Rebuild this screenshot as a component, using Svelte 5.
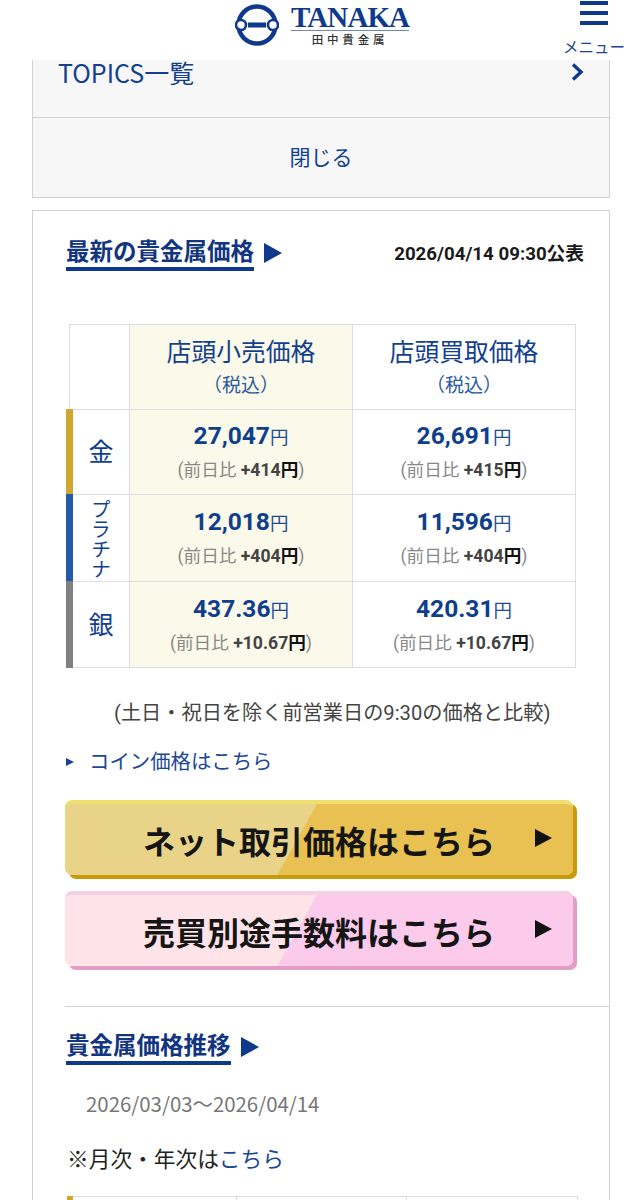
<script>
  const rows = [
    { name: '金', cls: 'gold', retail: '27,047', rd: '+414', buy: '26,691', bd: '+415' },
    { name: 'プラチナ', cls: 'plat', vertical: true, retail: '12,018', rd: '+404', buy: '11,596', bd: '+404' },
    { name: '銀', cls: 'silver', retail: '437.36', rd: '+10.67', buy: '420.31', bd: '+10.67' }
  ];
</script>

<div class="page">
  <header class="header">
    <div class="logo">
      <svg class="mark" width="44" height="44" viewBox="0 0 44 44" aria-hidden="true">
        <circle cx="22" cy="22" r="18.5" fill="none" stroke="#0f3a8c" stroke-width="4.5"/>
        <circle cx="6" cy="22" r="5" fill="#fff" stroke="#0f3a8c" stroke-width="2.6"/>
        <circle cx="38" cy="22" r="5" fill="#fff" stroke="#0f3a8c" stroke-width="2.6"/>
        <rect x="13" y="19.5" width="18" height="5" fill="#0f3a8c"/>
      </svg>
      <div class="wordmark">
        <div class="tanaka">TANAKA</div>
        <div class="kanji">田中貴金属</div>
      </div>
    </div>
    <div class="menu">
      <span class="bars"><i></i><i></i><i></i></span>
      <span class="menu-label">メニュー</span>
    </div>
  </header>

  <section class="topics">
    <div class="topics-link">
      <span class="topics-text">TOPICS一覧</span>
      <svg width="14" height="18" viewBox="0 0 14 18" aria-hidden="true"><path d="M3 1.5L11 9l-8 7.5" fill="none" stroke="#0f3a8c" stroke-width="3.4"/></svg>
    </div>
    <div class="close">閉じる</div>
  </section>

  <section class="card">
    <div class="head-row">
      <h2 class="title"><span>最新の貴金属価格</span><i class="tri"></i></h2>
      <div class="stamp">2026/04/14 09:30公表</div>
    </div>

    <table class="prices">
      <thead>
        <tr>
          <th class="corner"></th>
          <th class="retail">店頭小売価格<small>（税込）</small></th>
          <th>店頭買取価格<small>（税込）</small></th>
        </tr>
      </thead>
      <tbody>
        {#each rows as r}
          <tr class={r.cls}>
            <th class="metal"><span class:vertical={r.vertical}>{r.name}</span></th>
            <td class="retail">
              <div class="price">{r.retail}<span>円</span></div>
              <div class="diff">(前日比 <b>{r.rd}<em>円</em></b>)</div>
            </td>
            <td>
              <div class="price">{r.buy}<span>円</span></div>
              <div class="diff">(前日比 <b>{r.bd}<em>円</em></b>)</div>
            </td>
          </tr>
        {/each}
      </tbody>
    </table>

    <p class="note">(土日・祝日を除く前営業日の9:30の価格と比較)</p>
    <div class="coin"><i></i><span>コイン価格はこちら</span></div>

    <div class="buttons">
      <div class="btn btn-gold"><span>ネット取引価格はこちら</span><i></i></div>
      <div class="btn btn-pink"><span>売買別途手数料はこちら</span><i></i></div>
    </div>

    <div class="trend">
      <h2 class="title"><span>貴金属価格推移</span><i class="tri"></i></h2>
      <div class="range">2026/03/03～2026/04/14</div>
      <div class="monthly">※月次・年次は<span>こちら</span></div>
      <div class="next-table"><i class="mark-cell"></i><i></i><i></i></div>
    </div>
  </section>
</div>

<style>
  :global(body) {
    margin: 0;
    background: #fff;
  }
  .page {
    height: 1200px;
    overflow: hidden;
    font-family: Roboto, "Noto Sans CJK JP", sans-serif;
    color: #222;
  }
  .header {
    height: 60px;
    position: relative;
    display: flex;
    justify-content: center;
  }
  .logo {
    display: flex;
    align-items: flex-start;
    gap: 12px;
    margin: 3px 0 0 2px;
  }
  .wordmark {
    width: 118px;
    margin-top: 0;
  }
  .tanaka {
    font: bold 29px/28px "Liberation Serif", serif;
    color: #0f3a8c;
    letter-spacing: -0.9px;
    text-align: center;
    border-bottom: 1px solid #6d86bb;
    white-space: nowrap;
    height: 27px;
  }
  .kanji {
    font-size: 11.5px;
    line-height: 18px;
    font-weight: 500;
    letter-spacing: 3.8px;
    text-align: center;
    color: #333;
  }
  .menu {
    position: absolute;
    top: 0;
    right: 17px;
    width: 62px;
    display: flex;
    flex-direction: column;
    align-items: center;
  }
  .bars {
    display: flex;
    flex-direction: column;
    gap: 6px;
    margin-top: 1px;
  }
  .bars i {
    display: block;
    width: 28px;
    height: 4px;
    background: #0f3a8c;
  }
  .menu-label {
    font-size: 15.5px;
    line-height: 20px;
    margin-top: 13px;
    color: #1c4190;
    white-space: nowrap;
    position: relative;
    z-index: 1;
  }
  .topics {
    margin: 0 32px;
    box-sizing: border-box;
    height: 138px;
    background: #f7f7f7;
    border: 1px solid #d2d2d2;
    border-top: 0;
  }
  .topics-link {
    height: 58px;
    box-sizing: border-box;
    border-bottom: 1px solid #d2d2d2;
    display: flex;
    align-items: flex-start;
    justify-content: space-between;
    padding: 0 25px 0 25px;
    font-family: "Noto Sans CJK JP", sans-serif;
    font-size: 25px;
    line-height: 24px;
    color: #12408f;
  }
  .topics-link svg {
    margin-top: 3px;
  }
  .close {
    height: 75px;
    padding-bottom: 4px;
    display: flex;
    align-items: center;
    justify-content: center;
    font-size: 21px;
    color: #12408f;
  }
  .card {
    margin: 12px 32px 0;
    border: 1px solid #d2d2d2;
    padding: 0 0 0 33px;
    height: 1100px;
    box-sizing: border-box;
  }
  .head-row {
    display: flex;
    align-items: flex-start;
    justify-content: space-between;
    padding: 25px 25px 0 0;
    height: 113px;
    box-sizing: border-box;
  }
  .title {
    margin: 0;
    display: flex;
    align-items: flex-start;
    gap: 10px;
    font-size: 23.5px;
    font-weight: 700;
    color: #12357f;
    line-height: 33px;
  }
  .title span {
    border-bottom: 4px solid #0f3a8c;
    display: block;
    height: 31px;
    white-space: nowrap;
  }
  .tri {
    display: block;
    width: 0;
    height: 0;
    margin-top: 7px;
    border-left: 18px solid #0f3a8c;
    border-top: 10px solid transparent;
    border-bottom: 10px solid transparent;
  }
  .stamp {
    font-size: 18.7px;
    font-weight: 700;
    color: #1a1a1a;
    line-height: 36px;
    white-space: nowrap;
  }
  .prices {
    margin-left: 3px;
    width: 507px;
    border-collapse: collapse;
    table-layout: fixed;
  }
  .prices th,
  .prices td {
    border: 1px solid #ddd;
    padding: 0;
    text-align: center;
    font-weight: 400;
    color: #12408f;
  }
  .prices thead th {
    height: 85px;
    font-size: 24.8px;
    line-height: 32px;
    padding-top: 2px;
    box-sizing: border-box;
  }
  .prices small {
    display: block;
    font-size: 19px;
    line-height: 26px;
    margin-top: 4px;
    color: #2a5a9e;
  }
  .corner {
    width: 60px;
  }
  .prices .retail {
    background: #fbf9e9;
    width: 223px;
  }
  .prices tbody .metal {
    position: relative;
    font-size: 25px;
    background: #fff;
    padding: 0 0 4px 3px;
    box-sizing: border-box;
  }
  .prices tbody .plat .metal {
    padding: 0;
  }
  .metal::before {
    content: "";
    position: absolute;
    left: -4px;
    top: -1px;
    bottom: -1px;
    width: 7px;
    background: var(--bar);
  }
  .gold { --bar: #cfa630; }
  .plat { --bar: #245ba8; }
  .silver { --bar: #808080; }
  .gold td { height: 84px; }
  .plat td { height: 86px; }
  .silver td { height: 85px; }
  .vertical {
    display: block;
    width: 24px;
    writing-mode: vertical-rl;
    font-size: 20px;
    line-height: 24px;
    margin: 2px auto 0;
  }
  .price {
    font-size: 24.5px;
    font-weight: 700;
    line-height: 30px;
    color: #0f3f8c;
    margin-top: -1px;
  }
  .price span {
    font-size: 18.5px;
    font-weight: 400;
    color: #1f4c95;
  }
  .diff {
    font-size: 17.6px;
    line-height: 24px;
    margin-top: 5px;
    color: #888;
  }
  .diff b {
    color: #444;
    font-weight: 700;
  }
  .diff em {
    font-style: normal;
    color: #111;
  }
  .note {
    margin: 32px 0 0 48px;
    font-size: 20.2px;
    line-height: 26px;
    color: #444;
    white-space: nowrap;
  }
  .coin {
    display: flex;
    align-items: center;
    margin-top: 21px;
    font-size: 20.4px;
    line-height: 30px;
    color: #1c4894;
  }
  .coin i {
    width: 0;
    height: 0;
    border-left: 8px solid #1c4190;
    border-top: 4.5px solid transparent;
    border-bottom: 4.5px solid transparent;
    margin-right: 15px;
  }
  .buttons {
    display: flex;
    flex-direction: column;
    gap: 16px;
    margin: 23px 0 0 -1px;
    width: 508px;
  }
  .btn {
    position: relative;
    height: 75px;
    box-sizing: border-box;
    border-radius: 7px;
    display: flex;
    align-items: center;
    font-size: 32px;
    font-weight: 700;
    color: #151515;
    padding: 0 0 0 78px;
    border-top: 4px solid var(--top);
    background: linear-gradient(119deg, var(--light) 46%, var(--dark) 46%);
    box-shadow: 4px 4px 0 var(--shade);
    white-space: nowrap;
  }
  .btn i {
    position: absolute;
    left: 470px;
    top: 25px;
    width: 0;
    height: 0;
    border-left: 17px solid #111;
    border-top: 9px solid transparent;
    border-bottom: 9px solid transparent;
  }
  .btn-gold {
    --top: #efdf6f;
    --light: #e9d388;
    --dark: #e8c152;
    --shade: #c99a0a;
  }
  .btn-pink {
    --top: #f5cfe3;
    --light: #fee4e8;
    --dark: #fccbec;
    --shade: #e09ec8;
  }
  .trend {
    border-top: 1px solid #d2d2d2;
    margin: 40px 0 0 -1px;
    padding: 23px 0 0 1px;
  }
  .range {
    margin: 23px 0 0 20px;
    font-family: "Noto Sans CJK JP", sans-serif;
    font-size: 20.4px;
    line-height: 30px;
    color: #777;
  }
  .monthly {
    margin: 27px 0 0 1px;
    font-size: 21.7px;
    line-height: 30px;
    color: #222;
  }
  .monthly span {
    color: #1c4894;
  }
  .next-table {
    margin: 21px 0 0 1px;
    height: 20px;
    width: 511px;
    border-top: 1px solid #ddd;
    display: grid;
    grid-template-columns: 170px 170px 171px;
  }
  .next-table i {
    display: block;
    border-right: 1px solid #ddd;
    position: relative;
  }
  .next-table .mark-cell::before {
    content: "";
    position: absolute;
    left: 0;
    top: -1px;
    width: 6px;
    height: 4px;
    background: #cfa630;
  }
</style>
